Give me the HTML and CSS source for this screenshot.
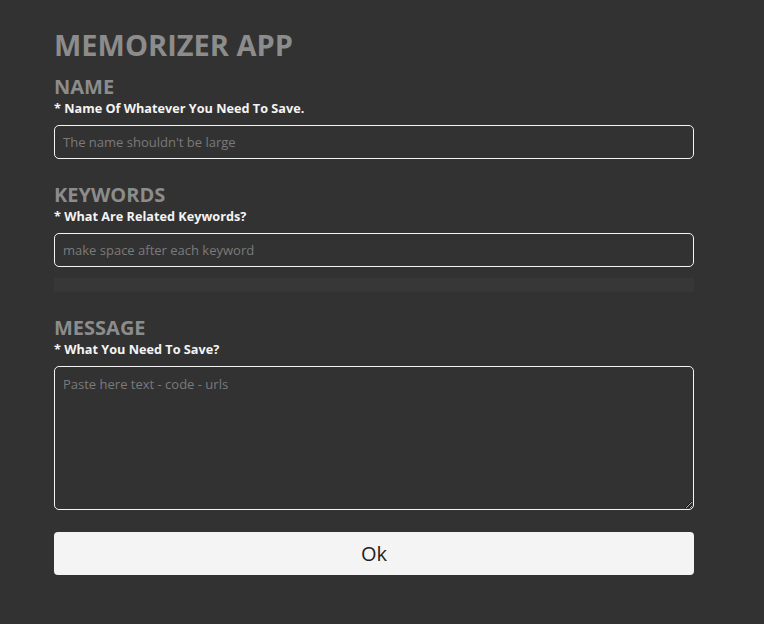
FILE: index.html
```html
<!DOCTYPE html>
<html>
<head>
<meta charset="utf-8">
<link rel="stylesheet" href="styles.css">
</head>
<body>
<main class="app">
  <h1 class="title">MEMORIZER APP</h1>
  <section class="field">
    <h2 class="label">NAME</h2>
    <p class="hint">* Name Of Whatever You Need To Save.</p>
    <input class="input" type="text" placeholder="The name shouldn't be large">
  </section>
  <section class="field">
    <h2 class="label">KEYWORDS</h2>
    <p class="hint">* What Are Related Keywords?</p>
    <input class="input" type="text" placeholder="make space after each keyword">
    <div class="tags"></div>
  </section>
  <section class="field">
    <h2 class="label">MESSAGE</h2>
    <p class="hint">* What You Need To Save?</p>
    <textarea class="textarea" placeholder="Paste here text - code - urls"></textarea>
  </section>
  <button class="ok">Ok</button>
</main>
</body>
</html>
```
FILE: styles.css
```css
html, body {
  margin: 0;
  padding: 0;
  background: #323232;
}
body {
  font-family: "Trebuchet MS", "Open Sans", "DejaVu Sans", sans-serif;
}
.app {
  width: 640px;
  margin-left: 54px;
  padding-top: 28px;
  display: flex;
  flex-direction: column;
}
.title {
  margin: 0 0 1px;
  font-size: 29px;
  line-height: 34px;
  font-weight: bold;
  color: #8c8c8c;
}
.field {
  display: flex;
  flex-direction: column;
}
.label {
  margin: 13px 0 0;
  font-size: 20px;
  line-height: 22px;
  font-weight: bold;
  color: #8c8c8c;
}
.hint {
  margin: 1px 0 8px;
  font-size: 12.7px;
  line-height: 18px;
  font-weight: bold;
  color: #f4f4f4;
}
.input, .textarea {
  box-sizing: border-box;
  width: 640px;
  background: #323232;
  border: 1px solid #f4f4f4;
  border-radius: 5px;
  color: #f4f4f4;
  font-family: inherit;
  font-size: 13px;
  padding: 0 8px;
  outline: none;
}
.input { height: 34px; }
.input::placeholder, .textarea::placeholder { color: #7a7a7a; }
.textarea {
  height: 144px;
  padding-top: 8px;
  resize: vertical;
}
.tags {
  height: 14px;
  margin-top: 11px;
  background: #373737;
}
.field + .field { margin-top: 12px; }
.ok {
  margin-top: 22px;
  height: 43px;
  width: 640px;
  background: #f4f4f4;
  border: none;
  border-radius: 4px;
  color: #222;
  font-family: inherit;
  font-size: 20px;
}
```
